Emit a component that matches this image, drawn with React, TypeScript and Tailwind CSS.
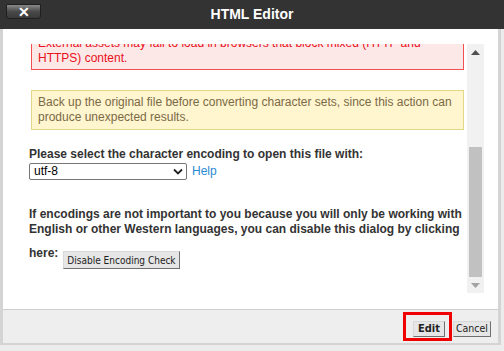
import React from "react";

const sans = { fontFamily: '"Liberation Sans", Arial, sans-serif' };
const tahoma = { fontFamily: '"DejaVu Sans Condensed", "DejaVu Sans", sans-serif' };

function Scrollbar() {
  return (
    <div className="flex w-[17px] shrink-0 flex-col bg-[#f1f1f1]">
      <div className="flex h-[17px] items-center justify-center">
        <svg width="9" height="5" viewBox="0 0 9 5">
          <path d="M0 5 L4.5 0 L9 5 Z" fill="#505050" />
        </svg>
      </div>
      <div className="flex-1 pt-[86px]">
        <div className="mx-[2px] h-full bg-[#c1c1c1]" />
      </div>
      <div className="flex h-[16px] items-center justify-center">
        <svg width="9" height="5" viewBox="0 0 9 5">
          <path d="M0 0 L4.5 5 L9 0 Z" fill="#a3a3a3" />
        </svg>
      </div>
    </div>
  );
}

export default function App() {
  return (
    <div className="flex h-[351px] w-[504px] flex-col bg-[#ececec]" style={sans}>
      {/* Title bar */}
      <div className="relative flex h-[29px] shrink-0 items-center justify-center bg-[#333333]">
        <button className="absolute left-[6px] top-[4px] flex h-[15px] w-[35px] items-center justify-center rounded-b-[3px] border border-[#1f1f1f] bg-gradient-to-b from-[#8a8a8a] via-[#4a4a4a] to-[#3a3a3a] text-[14px] font-bold leading-none text-white">
          ✕
        </button>
        <h1 className="text-[14px] font-bold text-white">HTML Editor</h1>
      </div>

      {/* Dialog body */}
      <div className="mr-[3px] flex flex-col border-x-[3px] border-b-[2px] border-[#d4d4d4] bg-white">
        <div className="flex h-[280px] flex-col pt-[15px] pb-[16px] pr-[14px]">
          <div className="flex min-h-0 flex-1">
            <div className="min-w-0 flex-1 overflow-hidden pl-[28px] pr-[3px]">
              <div className="-mt-[9px]">
                <div className="border border-[#f05050] bg-[#fde8e8] px-[6px] pb-[3px] text-[12px] leading-[15px] text-[#e8101a]">
                  <p>External assets may fail to load in browsers that block mixed (HTTP and</p>
                  <p>HTTPS) content.</p>
                </div>

                <div className="mt-[20px] border border-[#e3d788] bg-[#fff5cf] px-[6px] py-[4px] text-[12px] leading-[15px] text-[#7a6a45]">
                  <p>Back up the original file before converting character sets, since this action can</p>
                  <p>produce unexpected results.</p>
                </div>

                <div className="-ml-[2px] mt-[17px] text-[12px] text-[#333]">
                  <p className="font-bold leading-[15px]">Please select the character encoding to open this file with:</p>
                  <div className="flex items-center gap-[5px]">
                    <div className="flex h-[17px] w-[158px] items-center justify-between rounded-[2px] border border-[#767676] pl-[4px] pr-[3px] text-[12px] text-black">
                      <span>utf-8</span>
                      <svg width="10" height="7" viewBox="0 0 10 7">
                        <path d="M1 1.5 L5 5.5 L9 1.5" stroke="#222" strokeWidth="1.8" fill="none" />
                      </svg>
                    </div>
                    <span className="text-[#2b8ad4]">Help</span>
                  </div>

                  <p className="mt-[27px] font-bold leading-[15px]">
                    If encodings are not important to you because you will only be working with
                    English or other Western languages, you can disable this dialog by clicking
                  </p>
                  <div className="mt-[9px] flex items-start gap-[5px]">
                    <span className="font-bold leading-[15px]">here:</span>
                    <button
                      className="mt-[5px] h-[18px] border border-[#d8d8d8] border-b-[#707070] border-r-[#707070] bg-[#e6e6e6] px-[3px] text-[10px] leading-[15px] text-[#222]"
                      style={tahoma}
                    >
                      Disable Encoding Check
                    </button>
                  </div>
                </div>
              </div>
            </div>
            <Scrollbar />
          </div>
        </div>

        {/* Footer */}
        <div className="flex h-[34px] items-start justify-end gap-[1px] border-t-[1px] border-[#cfcfcf] bg-[#eeeeee] pr-[7px]">
          <div className="mt-[2px] border-[3px] border-[#f00000] pl-[7px] pr-[4px] pt-[6px] pb-[1px]">
            <button
              className="flex h-[16px] w-[32px] items-center justify-center border border-[#d8d8d8] border-b-[#707070] border-r-[#707070] bg-[#e6e6e6] text-[11px] font-bold text-[#222]"
              style={tahoma}
            >
              Edit
            </button>
          </div>
          <button
            className="mt-[11px] flex h-[16px] w-[38px] items-center justify-center border border-[#d8d8d8] border-b-[#707070] border-r-[#707070] bg-[#e6e6e6] text-[10.5px] text-[#222]"
            style={tahoma}
          >
            Cancel
          </button>
        </div>
      </div>
    </div>
  );
}
